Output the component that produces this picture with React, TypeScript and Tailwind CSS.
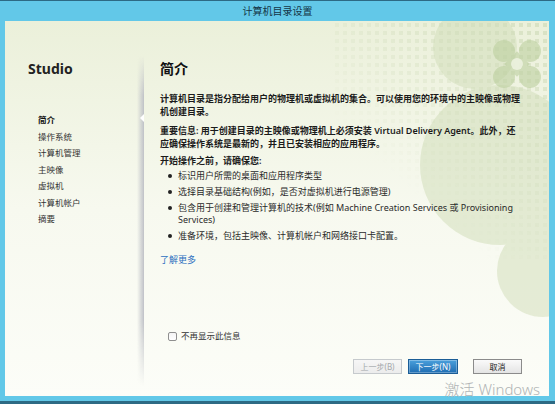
import React from "react";

const steps = ["简介", "操作系统", "计算机管理", "主映像", "虚拟机", "计算机帐户", "摘要"];

/* ── Green Studio artwork in the top-right corner ── */
function Backdrop() {
  return (
    <svg
      className="pointer-events-none absolute inset-0"
      width="544"
      height="375"
      viewBox="0 0 544 375"
    >
      <defs>
        <pattern id="dots" width="8" height="8" patternUnits="userSpaceOnUse">
          <rect x="2" y="2" width="4" height="4" fill="#cfdbb9" />
        </pattern>
        <linearGradient id="fade" x1="1" y1="0" x2="0.2" y2="1">
          <stop offset="0" stopColor="white" stopOpacity="1" />
          <stop offset="0.75" stopColor="white" stopOpacity="0" />
        </linearGradient>
        <mask id="dotmask">
          <rect x="330" y="0" width="214" height="240" fill="url(#fade)" />
        </mask>
      </defs>
      <g fill="#d3dfbc" opacity="0.55">
        <circle cx="495" cy="144" r="80" />
        <circle cx="470" cy="26" r="42" />
        <circle cx="538" cy="250" r="46" />
      </g>
      <rect x="330" y="0" width="214" height="240" fill="url(#dots)" mask="url(#dotmask)" opacity="0.7" />
      {/* X mark */}
      <g fill="#bdd0a0" opacity="0.6">
        <circle cx="499" cy="30" r="11" />
        <circle cx="525" cy="30" r="11" />
        <circle cx="499" cy="56" r="11" />
        <circle cx="525" cy="56" r="11" />
        <rect x="503" y="34" width="18" height="18" transform="rotate(45 512 43)" />
      </g>
      <circle cx="512" cy="43" r="6" fill="#eef3e2" opacity="0.85" />
    </svg>
  );
}

export default function App() {
  return (
    <div className="relative flex h-[404px] w-[555px] flex-col overflow-hidden border-t border-b-[3px] border-[#2d6a84] bg-[#62c8e8] font-['Noto_Sans','Noto_Sans_CJK_SC',sans-serif] text-[#1b1b1b]">
      {/* Title bar */}
      <div className="flex h-[20px] shrink-0 items-center justify-center text-[10px] text-[#143646]">
        计算机目录设置
      </div>

      <div className="relative mb-[5px] ml-[5px] mr-[6px] flex flex-1 overflow-hidden bg-linear-to-b from-[#ebf0da] via-[#f7f9ef] to-[#fcfdf8]">
        <Backdrop />

        {/* Left step list */}
        <div className="relative w-[132px] shrink-0 pl-[23px] pt-[39px]">
          <div className="text-[14px] font-bold leading-[18px] text-[#222]">Studio</div>
          <ul className="ml-[10px] mt-[34px]">
            {steps.map((s, i) => (
              <li
                key={s}
                className={`text-[8.5px] leading-[16.5px] ${i === 0 ? "font-bold text-[#111]" : "text-[#333]"}`}
              >
                {s}
              </li>
            ))}
          </ul>
        </div>

        {/* Panel edge shadow + notch */}
        <div className="relative w-[7px] shrink-0">
          <div className="absolute inset-0 bg-linear-to-r from-transparent to-[#bfc1c7] [mask-image:linear-gradient(to_bottom,transparent_35px,black_75px,black_300px,transparent_365px)]" />
          <div className="absolute right-0 top-[93px] h-0 w-0 border-y-[4px] border-r-[4px] border-y-transparent border-r-white" />
        </div>

        {/* Content */}
        <div className="relative flex flex-1 flex-col pb-[22px] pl-[16px] pr-[27px] pt-[39px]">
          <h1 className="text-[14px] font-bold leading-[18px] text-[#111]">简介</h1>

          <p className="mt-[14px] text-[9px] font-semibold leading-[13px]">
            计算机目录是指分配给用户的物理机或虚拟机的集合。可以使用您的环境中的主映像或物理
            <br />
            机创建目录。
          </p>
          <p className="mt-[6px] text-[9px] font-semibold leading-[13px]">
            重要信息: 用于创建目录的主映像或物理机上必须安装 Virtual Delivery Agent。此外，还
            <br />
            应确保操作系统是最新的，并且已安装相应的应用程序。
          </p>

          <p className="mt-[5px] text-[9px] font-semibold leading-[12px]">开始操作之前，请确保您:</p>
          <ul className="mt-[3px] text-[9px] leading-[12px] text-[#2a2a2a]">
            {[
              ["标识用户所需的桌面和应用程序类型"],
              ["选择目录基础结构(例如，是否对虚拟机进行电源管理)"],
              ["包含用于创建和管理计算机的技术(例如 Machine Creation Services 或 Provisioning", "Services)"],
              ["准备环境，包括主映像、计算机帐户和网络接口卡配置。"],
            ].map((lines, i) => (
              <li key={i} className={`flex ${i === 0 ? "" : "mt-[4px]"}`}>
                <span className="mt-[4px] ml-[8px] mr-[6px] h-[4px] w-[4px] shrink-0 rounded-full bg-[#222]" />
                <span className="whitespace-nowrap">
                  {lines.map((l, j) => (
                    <span key={j} className="block">
                      {l}
                    </span>
                  ))}
                </span>
              </li>
            ))}
          </ul>

          <a className="mt-[12px] text-[9px] leading-[12px] text-[#2c6fc0]">了解更多</a>

          <div className="flex-1" />

          <label className="ml-[8px] flex items-center gap-[4px] text-[8.5px] leading-[12px] text-[#333]">
            <span className="h-[9px] w-[9px] rounded-[2px] border border-[#8f8f8f] bg-linear-to-b from-[#f4f4f4] to-white" />
            不再显示此信息
          </label>

          <div className="mt-[17px] flex justify-end">
            <button className="flex h-[15px] w-[49px] items-center justify-center border border-[#c6cacd] bg-linear-to-b from-[#f6f6f6] to-[#ececec] text-[8px] text-[#a4a8ab]">
              上一步(B)
            </button>
            <button className="ml-[6px] flex h-[15px] w-[50px] items-center justify-center border border-[#1b5d96] bg-linear-to-b from-[#4aa0dc] to-[#1f6db2] text-[8px] text-white shadow-[inset_0_0_0_1px_rgba(255,255,255,0.3)]">
              下一步(N)
            </button>
            <button className="ml-[15px] flex h-[15px] w-[49px] items-center justify-center border border-[#8b8b8b] bg-linear-to-b from-[#fafafa] to-[#e4e4e4] text-[8px] text-[#222]">
              取消
            </button>
          </div>
        </div>
      </div>

      {/* Activation watermark */}
      <div className="pointer-events-none absolute bottom-[3px] right-[15px] text-[15px] font-light leading-[18px] text-[#b0b4b5]">
        激活 Windows
      </div>
    </div>
  );
}
